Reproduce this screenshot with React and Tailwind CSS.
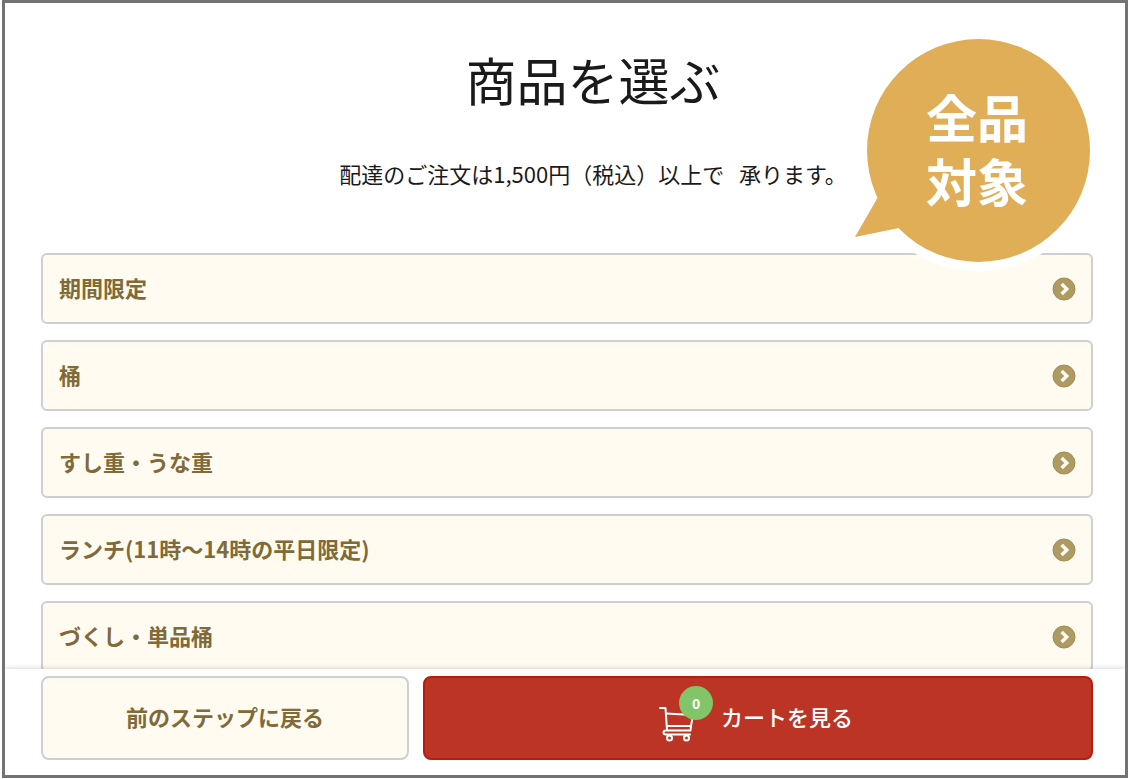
const categories = [
  "期間限定",
  "桶",
  "すし重・うな重",
  "ランチ(11時～14時の平日限定)",
  "づくし・単品桶",
];

function ArrowIcon() {
  return (
    <svg className="size-6 shrink-0" viewBox="0 0 24 24" fill="none" aria-hidden="true">
      <circle cx="12" cy="12" r="11" fill="#ae9a63" stroke="#a18c52" strokeWidth="1" />
      <path d="M9.600 7L14.800 12L9.600 17" stroke="#fffbf0" strokeWidth="3.400" />
    </svg>
  );
}

function CartIcon() {
  return (
    <svg
      className="h-9 w-9"
      viewBox="0 0 36 36"
      fill="none"
      stroke="#fff"
      strokeWidth="2"
      strokeLinecap="round"
      strokeLinejoin="round"
      aria-hidden="true"
    >
      <path d="M1 2H6.500L8 24" />
      <path d="M7 7.500L34 9L32 20H8" />
      <path d="M32 20L31.500 24.500H7Q4.500 24.500 4.500 26.500Q4.500 28.500 7 28.500H31" />
      <circle cx="10.500" cy="32" r="2.500" />
      <circle cx="27.500" cy="32" r="2.500" />
    </svg>
  );
}

function Balloon() {
  return (
    <div className="absolute top-[27px] right-[25px] h-[242px] w-[255px]">
      <svg className="absolute inset-0 size-full" viewBox="0 0 255 242" aria-hidden="true">
        <circle cx="133.500" cy="120.500" r="121" fill="#fff" />
        <circle cx="133.500" cy="120.500" r="111.500" fill="#e0ae57" />
        <path d="M33 167L10 207L54 198Z" fill="#e0ae57" />
      </svg>
      <p className="relative pt-[54px] pl-[9px] text-center text-[51px] leading-[64px] font-bold text-white">
        全品
        <br />
        対象
      </p>
    </div>
  );
}

export default function App() {
  return (
    <div className="h-screen bg-white px-[2px] pb-px font-['Noto_Sans_CJK_JP',sans-serif]">
      <div className="relative flex h-full flex-col overflow-hidden border-[3px] border-[#737373]">
        <main className="min-h-0 flex-1 overflow-hidden pr-8 pl-9">
          <header className="pt-[46px] pl-[52px] text-center text-[#1a1a1a]">
            <h1 className="text-[51px] leading-[60px]">商品を選ぶ</h1>
            <p className="mt-12 text-[22px] leading-8">
              配達のご注文は1,500円（税込）以上で&nbsp;&nbsp; 承ります。
            </p>
          </header>
          <ul className="mt-16 space-y-4">
            {categories.map((name) => (
              <li key={name}>
                <a
                  href="#"
                  className="flex h-[71px] items-center justify-between rounded-md border-2 border-[#cfcfcf] bg-[#fffbf0] pr-[15px] pl-4 text-[22px] leading-8 font-bold text-[#806a38]"
                >
                  <span className="pb-1">{name}</span>
                  <ArrowIcon />
                </a>
              </li>
            ))}
          </ul>
        </main>

        <footer className="relative flex gap-[14px] bg-white pt-[7px] pr-8 pb-[15px] pl-9 shadow-[0_0_6px_rgba(0,0,0,0.2)]">
          <button className="h-[84px] w-[35%] rounded-lg border-2 border-[#cfcfcf] bg-[#fffbf0] pb-1 text-[22px] font-bold text-[#806a38]">
            前のステップに戻る
          </button>
          <button className="flex h-[84px] flex-1 items-center justify-center gap-[26px] rounded-lg border-2 border-[#b81c0c] bg-[#bc3425] pr-1 text-[22px] font-medium text-white">
            <span className="relative mt-3">
              <CartIcon />
              <span className="absolute -top-5 left-5 flex size-[34px] items-center justify-center rounded-full bg-[#82c468] text-sm font-bold">
                0
              </span>
            </span>
            <span className="pb-1">カートを見る</span>
          </button>
        </footer>

        <Balloon />
      </div>
    </div>
  );
}
